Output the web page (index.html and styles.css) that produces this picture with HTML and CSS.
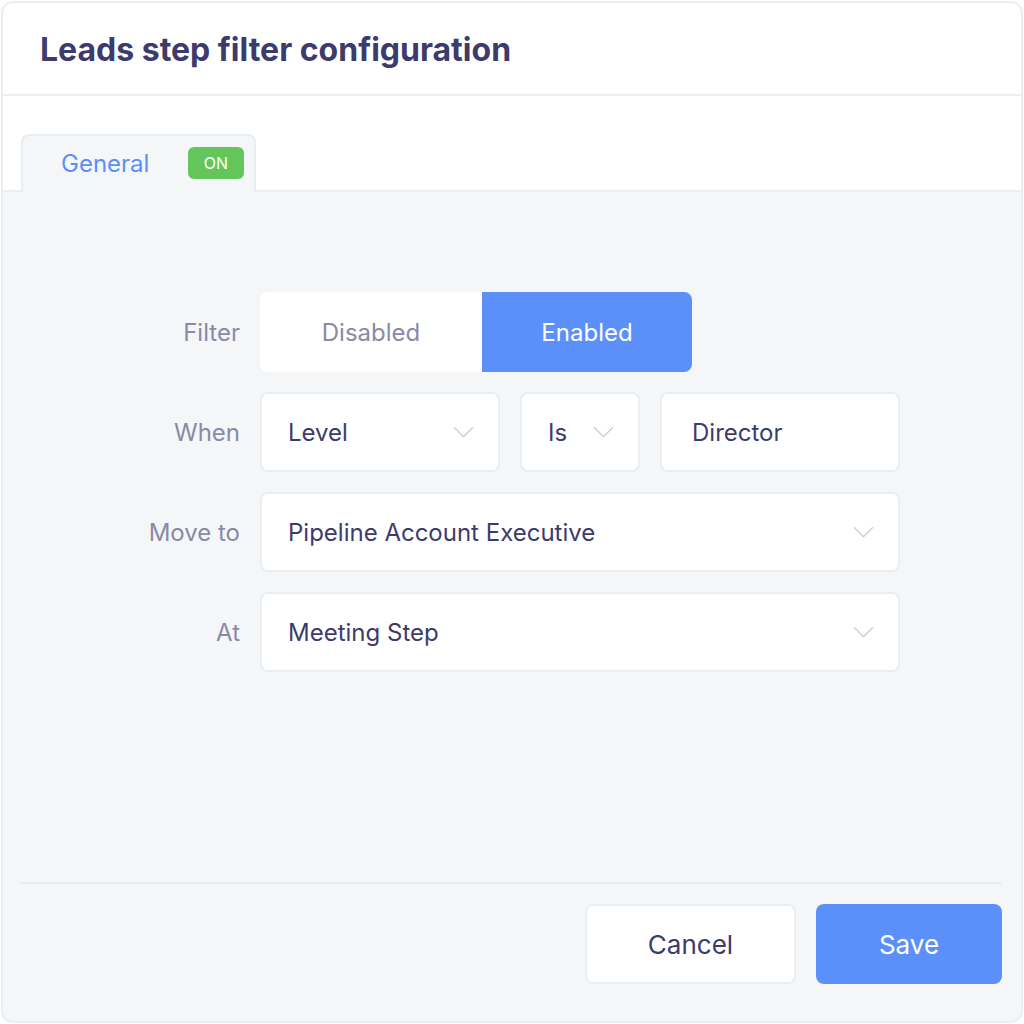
FILE: index.html
```html
<!DOCTYPE html>
<html lang="en">
<head>
    <meta charset="UTF-8">
    <title>Leads step filter configuration</title>
    <link rel="stylesheet" href="styles.css">
</head>
<body>
    <div class="modal">
        <div class="modal-header">
            <h1>Leads step filter configuration</h1>
        </div>

        <div class="tabs">
            <div class="tab active">
                <span class="tab-label">General</span>
                <span class="badge">ON</span>
            </div>
        </div>

        <div class="modal-body">
            <div class="form">
                <label class="field-label">Filter</label>
                <div class="toggle">
                    <button class="toggle-opt">Disabled</button>
                    <button class="toggle-opt selected">Enabled</button>
                </div>

                <label class="field-label">When</label>
                <div class="row">
                    <div class="select select-wide">
                        <span>Level</span>
                        <svg class="chevron" viewBox="0 0 20 12"><path d="M1 1 L10 10 L19 1"/></svg>
                    </div>
                    <div class="select select-small">
                        <span>Is</span>
                        <svg class="chevron" viewBox="0 0 20 12"><path d="M1 1 L10 10 L19 1"/></svg>
                    </div>
                    <div class="input">Director</div>
                </div>

                <label class="field-label">Move to</label>
                <div class="select">
                    <span>Pipeline Account Executive</span>
                    <svg class="chevron" viewBox="0 0 20 12"><path d="M1 1 L10 10 L19 1"/></svg>
                </div>

                <label class="field-label">At</label>
                <div class="select">
                    <span>Meeting Step</span>
                    <svg class="chevron" viewBox="0 0 20 12"><path d="M1 1 L10 10 L19 1"/></svg>
                </div>
            </div>

            <div class="modal-footer">
                <button class="btn btn-cancel">Cancel</button>
                <button class="btn btn-save">Save</button>
            </div>
        </div>
    </div>
</body>
</html>
```

FILE: styles.css
```css
* {
    box-sizing: border-box;
}

body {
    margin: 0;
    padding: 1px;
    background: #ffffff;
    font-family: 'Inter', 'Liberation Sans', sans-serif;
    color: #3d3b6b;
}

.modal {
    height: 1022px;
    border: 2px solid #e8eef2;
    border-radius: 12px;
    overflow: hidden;
    display: flex;
    flex-direction: column;
    background: #f4f6f8;
}

.modal-header {
    background: #ffffff;
    height: 93px;
    border-bottom: 2px solid #e8eef2;
    padding: 0 37px;
    display: flex;
    align-items: center;
}

h1 {
    margin: 2px 0 0 0;
    font-size: 32px;
    font-weight: 700;
    color: #3d3b6b;
}

.tabs {
    background: #ffffff;
    height: 96px;
    border-bottom: 2px solid #e8eef2;
    padding: 38px 0 0 18px;
    display: flex;
    align-items: flex-end;
}

.tab {
    height: 58px;
    width: 235px;
    margin-bottom: -2px;
    background: #f4f6f8;
    border: 2px solid #e8eef2;
    border-bottom: none;
    border-radius: 8px 8px 0 0;
    display: flex;
    align-items: center;
    padding: 0 10px 2px 38px;
}

.tab-label {
    font-size: 24px;
    color: #5b8ff9;
    flex: 1;
}

.badge {
    background: #64c65a;
    color: #ffffff;
    font-size: 16px;
    width: 56px;
    height: 32px;
    border-radius: 6px;
    display: flex;
    align-items: center;
    justify-content: center;
}

.modal-body {
    flex: 1;
    display: flex;
    flex-direction: column;
    padding: 100px 19px 37px 17px;
}

.form {
    display: grid;
    grid-template-columns: 220px 640px;
    column-gap: 20px;
    row-gap: 20px;
}

.field-label {
    font-size: 24px;
    color: #8a89a6;
    text-align: right;
    align-self: center;
}

.toggle {
    display: flex;
    width: 432px;
    height: 80px;
    border-radius: 8px;
    overflow: hidden;
}

.toggle-opt {
    border: none;
    font-family: inherit;
    font-size: 24px;
    background: #ffffff;
    color: #8a89a6;
    width: 222px;
}

.toggle-opt.selected {
    background: #5b8ff9;
    color: #ffffff;
    width: 210px;
}

.row {
    display: flex;
    gap: 20px;
}

.select,
.input {
    height: 80px;
    background: #ffffff;
    border: 2px solid #e8eef2;
    border-radius: 8px;
    font-size: 24px;
    color: #3d3b6b;
    display: flex;
    align-items: center;
}

.select {
    padding: 0 24px 0 26px;
    justify-content: space-between;
}

.select-wide {
    width: 240px;
}

.select-small {
    width: 120px;
    padding: 0 24px 0 26px;
}

.input {
    width: 240px;
    padding: 0 30px;
}

.chevron {
    width: 21px;
    height: 13px;
    fill: none;
    stroke: #cfcfdc;
    stroke-width: 1.5;
}

.modal-footer {
    margin-top: auto;
    border-top: 2px solid #e8eef2;
    padding-top: 20px;
    display: flex;
    justify-content: flex-end;
    gap: 20px;
}

.btn {
    height: 80px;
    border-radius: 8px;
    font-family: inherit;
    font-size: 26px;
    cursor: pointer;
}

.btn-cancel {
    width: 211px;
    background: #ffffff;
    border: 2px solid #e8eef2;
    color: #3d3b6b;
}

.btn-save {
    width: 186px;
    background: #5b8ff9;
    border: none;
    color: #ffffff;
}
```
